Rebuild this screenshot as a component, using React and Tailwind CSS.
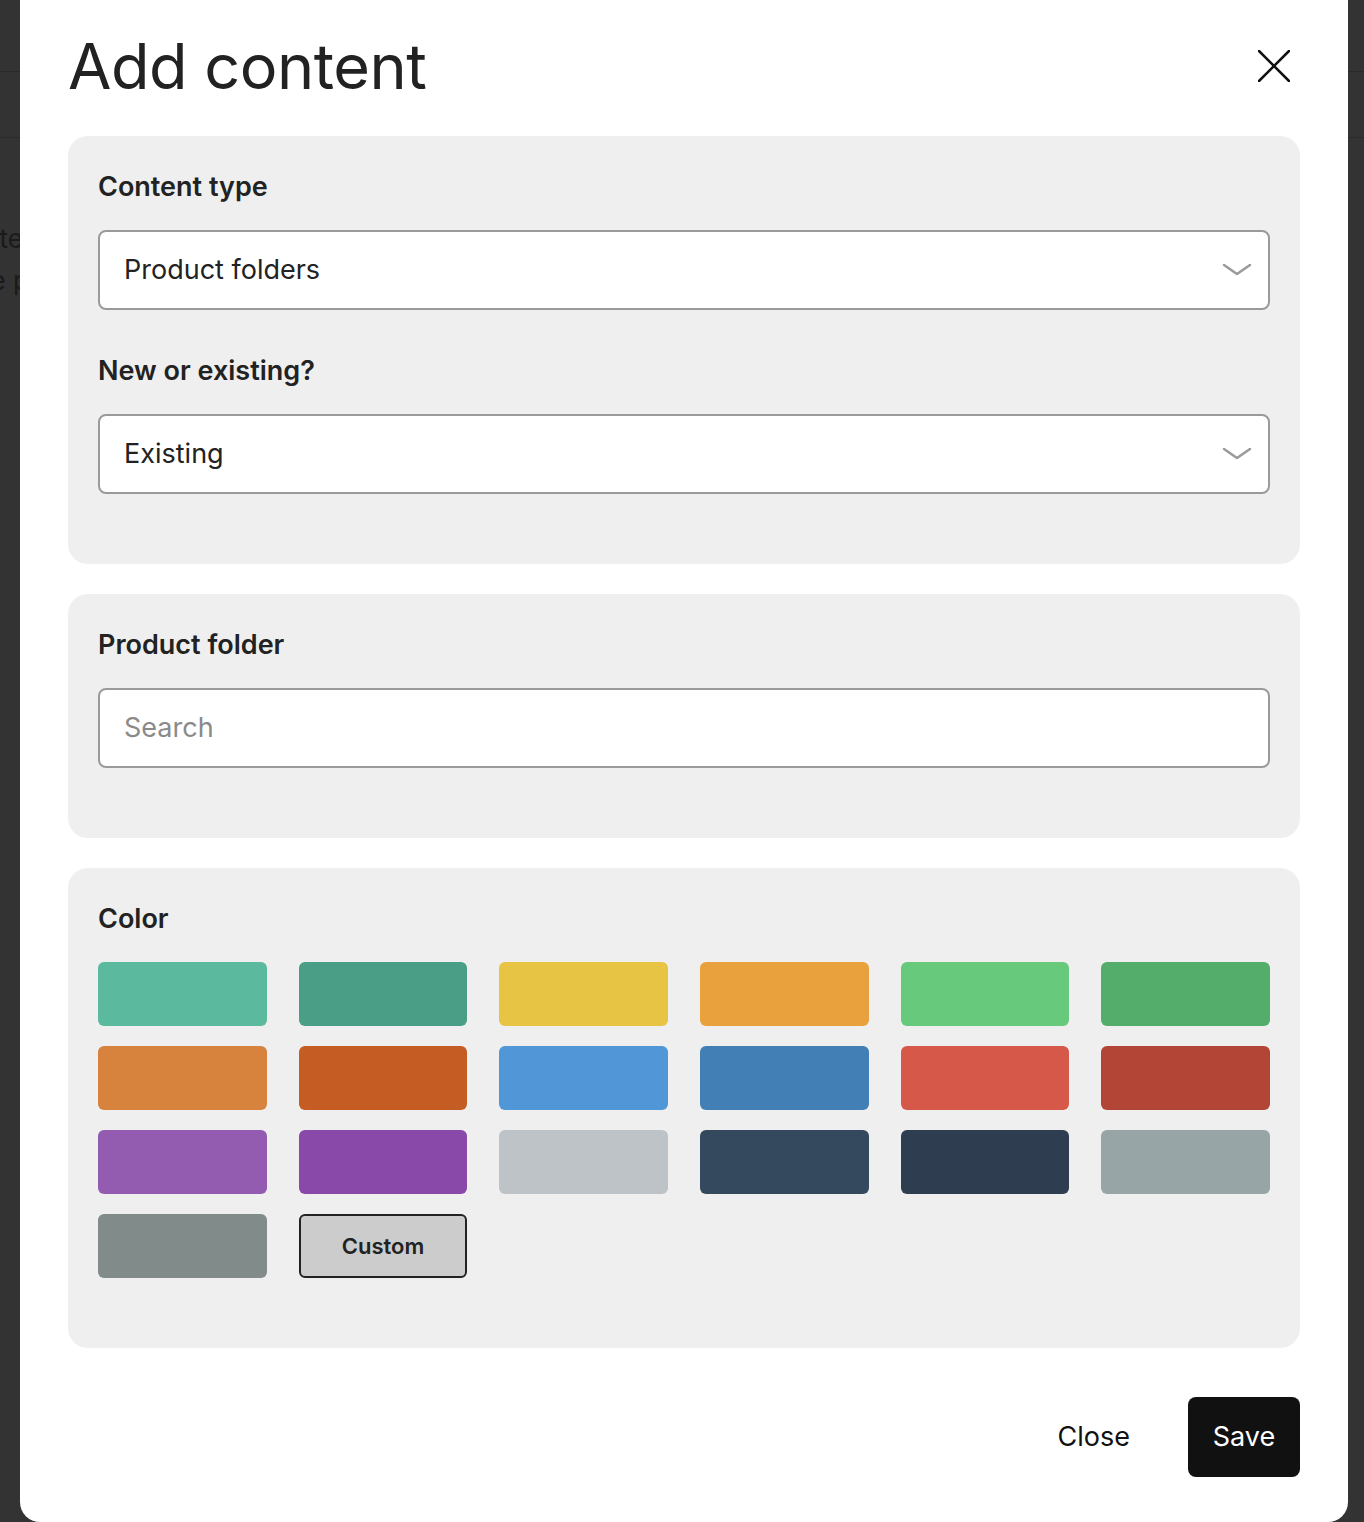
import React from "react";

// Palette of the "Color" picker, row by row.
const SWATCHES = [
  "#5bba9d", "#4a9e86", "#e8c444", "#e8a13c", "#66c97b", "#55ad6b",
  "#d7833d", "#c45c23", "#5196d6", "#417fb4", "#d65849", "#b34536",
  "#935cb0", "#8849a8", "#bec3c7", "#34495e", "#2f3d51", "#97a5a6",
  "#818b8a",
];

function Chevron() {
  return (
    <svg width="30" height="14" viewBox="0 0 30 14" fill="none" className="shrink-0">
      <polyline points="2,2 15,11 28,2" stroke="#9a9a9a" strokeWidth="2.5" strokeLinecap="round" strokeLinejoin="round" />
    </svg>
  );
}

function Label({ children }) {
  return <div className="h-10 flex items-center text-[27px] font-semibold text-[#222] leading-none">{children}</div>;
}

function Select({ value }) {
  return (
    <div className="mt-6 mb-10 h-20 flex items-center justify-between rounded-lg border-2 border-[#9a9a9a] bg-white pl-6 pr-4">
      <span className="text-[27px] text-[#222]">{value}</span>
      <Chevron />
    </div>
  );
}

function Section({ children }) {
  return <div className="rounded-[20px] bg-[#efefef] p-[30px]">{children}</div>;
}

export default function App() {
  return (
    <div className="relative h-[1522px] overflow-hidden bg-[#333333]" style={{ fontFamily: "Inter, 'Noto Sans', sans-serif" }}>
      {/* page behind the overlay */}
      <div className="absolute inset-0">
        <div className="h-[72px] border-b border-[#2b2b2b]" />
        <div className="h-[66px] border-b border-[#2b2b2b]" />
        <div className="pt-[80px] text-[26px] leading-[42px] text-[#1a1a1a]">
          <div className="w-[23px] flex justify-end whitespace-nowrap">Complete</div>
          <div className="w-[29px] flex justify-end whitespace-nowrap">in the p</div>
        </div>
      </div>

      {/* modal */}
      <div className="relative ml-5 mr-4 -mt-5 h-[1542px] rounded-[20px] bg-white px-12 pt-5">
        <div className="flex items-center justify-between h-[136px] pb-1">
          <h1 className="text-[63px] font-normal text-[#222] leading-none tracking-[-0.5px]">Add content</h1>
          <button className="mr-[10px]">
            <svg width="32" height="32" viewBox="0 0 32 32" fill="none">
              <line x1="1" y1="1" x2="31" y2="31" stroke="#111" strokeWidth="2.5" strokeLinecap="round" />
              <line x1="31" y1="1" x2="1" y2="31" stroke="#111" strokeWidth="2.5" strokeLinecap="round" />
            </svg>
          </button>
        </div>

        <div className="flex flex-col gap-[30px]">
          <Section>
            <Label>Content type</Label>
            <Select value="Product folders" />
            <Label>New or existing?</Label>
            <Select value="Existing" />
          </Section>

          <Section>
            <Label>Product folder</Label>
            <div className="mt-6 mb-10 h-20 flex items-center rounded-lg border-2 border-[#9a9a9a] bg-white pl-6">
              <span className="text-[27px] text-[#8a8a8a]">Search</span>
            </div>
          </Section>

          <Section>
            <Label>Color</Label>
            <div className="mt-6 mb-10 grid grid-cols-6 gap-x-8 gap-y-5">
              {SWATCHES.map((c) => (
                <div key={c} className="h-16 rounded-md" style={{ backgroundColor: c }} />
              ))}
              <button className="h-16 rounded-md border-2 border-[#222] bg-[#cccccc] text-[22px] font-semibold text-[#222]">
                Custom
              </button>
            </div>
          </Section>
        </div>

        <div className="mt-[49px] flex items-center justify-end gap-[34px]">
          <button className="px-6 h-20 text-[27px] text-[#111]">Close</button>
          <button className="h-20 w-28 rounded-lg bg-[#111] text-[27px] text-white">Save</button>
        </div>
      </div>
    </div>
  );
}
